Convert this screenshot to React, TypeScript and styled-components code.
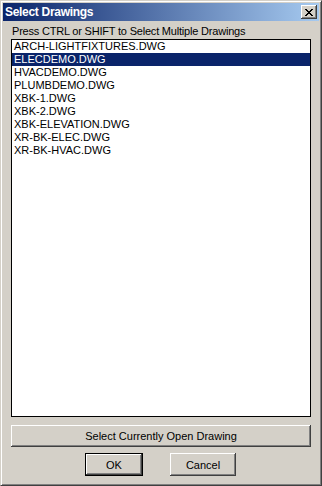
import React, { useState } from 'react';
import styled, { createGlobalStyle } from 'styled-components';

const Global = createGlobalStyle`
  html, body { margin: 0; padding: 0; background: #d4d0c8; }
  * { box-sizing: border-box; }
`;

const Window = styled.div`
  width: 322px;
  height: 486px;
  display: flex;
  flex-direction: column;
  background: #d4d0c8;
  border-top: 1px solid #d4d0c8;
  border-left: 1px solid #d4d0c8;
  border-right: 1px solid #404040;
  border-bottom: 1px solid #404040;
  box-shadow: inset 1px 1px #ffffff, inset -1px -1px #808080;
  padding: 2px;
  font-family: "Liberation Sans", Arial, sans-serif;
  font-size: 11px;
  color: #000;
`;

const TitleBar = styled.div`
  height: 18px;
  display: flex;
  align-items: center;
  justify-content: space-between;
  padding: 0 2px 0 2px;
  background: linear-gradient(to right, #0a246a, #a6caf0);
`;

const Title = styled.span`
  color: #fff;
  font-weight: bold;
  font-size: 12px;
  letter-spacing: -0.3px;
`;

const CloseButton = styled.button`
  width: 16px;
  height: 14px;
  padding: 0;
  display: flex;
  align-items: center;
  justify-content: center;
  background: #d4d0c8;
  border: none;
  box-shadow: inset -1px -1px #404040, inset 1px 1px #ffffff, inset -2px -2px #808080, inset 2px 2px #d4d0c8;
`;

const Content = styled.div`
  flex: 1;
  display: flex;
  flex-direction: column;
  padding: 0 8px 0 8px;
`;

const Hint = styled.div`
  height: 18px;
  line-height: 13px;
  padding-top: 4px;
  padding-left: 1px;
  white-space: nowrap;
  letter-spacing: -0.2px;
`;

const List = styled.div`
  height: 378px;
  background: #fff;
  border: 1px solid #000;
  display: flex;
  flex-direction: column;
`;

const Item = styled.div<{ $selected: boolean }>`
  height: 13px;
  line-height: 13px;
  padding-left: 2px;
  white-space: nowrap;
  cursor: default;
  background: ${p => (p.$selected ? '#0a246a' : 'transparent')};
  color: ${p => (p.$selected ? '#fff' : '#000')};
`;

const Button = styled.button<{ $default?: boolean }>`
  height: 23px;
  padding: 0;
  font-family: "Liberation Sans", Arial, sans-serif;
  font-size: 11px;
  color: #000;
  background: #d4d0c8;
  border: ${p => (p.$default ? '1px solid #000' : 'none')};
  box-shadow: inset -1px -1px #404040, inset 1px 1px #ffffff, inset -2px -2px #808080, inset 2px 2px #d4d0c8;
`;

const WideButton = styled(Button)`
  width: 300px;
  height: 22px;
  margin-top: 8px;
`;

const ButtonRow = styled.div`
  display: flex;
  margin-top: 6px;
  padding-left: 74px;
  gap: 27px;
`;

const OkButton = styled(Button)`
  width: 58px;
`;

const CancelButton = styled(Button)`
  width: 66px;
`;

const files = [
  'ARCH-LIGHTFIXTURES.DWG',
  'ELECDEMO.DWG',
  'HVACDEMO.DWG',
  'PLUMBDEMO.DWG',
  'XBK-1.DWG',
  'XBK-2.DWG',
  'XBK-ELEVATION.DWG',
  'XR-BK-ELEC.DWG',
  'XR-BK-HVAC.DWG',
];

export default function App() {
  const [selected, setSelected] = useState(1);
  return (
    <>
      <Global />
      <Window>
        <TitleBar>
          <Title>Select Drawings</Title>
          <CloseButton>
            <svg width="8" height="7" viewBox="0 0 8 7" shapeRendering="crispEdges">
              <path d="M0 0h2v1h-2zM6 0h2v1h-2zM1 1h2v1h-2zM5 1h2v1h-2zM2 2h4v1h-4zM3 3h2v1h-2zM2 4h4v1h-4zM1 5h2v1h-2zM5 5h2v1h-2zM0 6h2v1h-2zM6 6h2v1h-2z" fill="#000" />
            </svg>
          </CloseButton>
        </TitleBar>
        <Content>
          <Hint>Press CTRL or SHIFT to Select Multiple Drawings</Hint>
          <List>
            {files.map((f, i) => (
              <Item key={f} $selected={i === selected} onClick={() => setSelected(i)}>
                {f}
              </Item>
            ))}
          </List>
          <WideButton>Select Currently Open Drawing</WideButton>
          <ButtonRow>
            <OkButton $default>OK</OkButton>
            <CancelButton>Cancel</CancelButton>
          </ButtonRow>
        </Content>
      </Window>
    </>
  );
}
